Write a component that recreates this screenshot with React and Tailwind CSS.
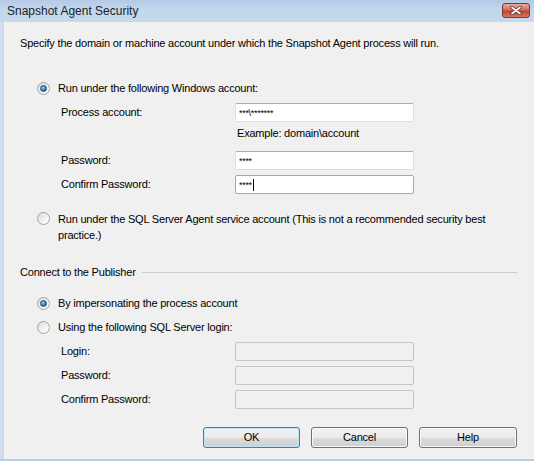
import React from "react";

// Windows 7 style radio button
const Radio = ({ checked }) => (
  <span className="relative w-[13px] h-[13px] shrink-0 rounded-full border border-[#a2a2a2] bg-[linear-gradient(135deg,#d9d9d9,#f4f4f4_60%,#ffffff)] flex items-center justify-center">
    {checked && (
      <span className="w-[7px] h-[7px] rounded-full border border-[#1c4e73] bg-[radial-gradient(circle_at_40%_35%,#9fd7ff,#2a7bc4_55%,#1d5c95)]" />
    )}
  </span>
);

const TextBox = ({ value, focused, disabled, caret }) => {
  let cls =
    "w-[179px] h-[19px] rounded-[2px] border flex items-center pl-[3px] text-[9px] leading-none tracking-[-0.3px] ";
  if (disabled) cls += "bg-[#f0f0f0] border-[#c5c5c5]";
  else if (focused) cls += "bg-white border-[#7fb2e4]";
  else cls += "bg-white border-[#dbdfe6] border-t-[#abadb3]";
  return (
    <div className={cls}>
      <span className="pt-[2px]">{value}</span>
      {caret && <span className="w-px h-[12px] bg-black ml-[1px]" />}
    </div>
  );
};

const FieldRow = ({ label, className, ...box }) => (
  <div className={"flex items-center " + className}>
    <span className="ml-[41px] w-[174px]">{label}</span>
    <TextBox {...box} />
  </div>
);

const Button = ({ label, isDefault, className }) => (
  <button
    type="button"
    className={
      "h-[21px] rounded-[3px] border text-[11px] text-black bg-[linear-gradient(#f2f2f2,#ebebeb_50%,#dddddd_50%,#cfcfcf)] " +
      (isDefault
        ? "border-[#3c7fb1] shadow-[inset_0_0_0_1px_#bfe4f8]"
        : "border-[#707070] shadow-[inset_0_0_0_1px_#fbfbfb]") +
      " " +
      className
    }
  >
    {label}
  </button>
);

const CloseButton = () => (
  <div className="w-[28px] h-[15px] mt-[3px] mr-[4px] rounded-[3px] border border-[#7a3a34] bg-[linear-gradient(#e9a99b,#d0705f_45%,#c0432d_55%,#d67b62)] flex items-center justify-center">
    <svg width="12" height="9" viewBox="0 0 12 9">
      <path d="M2 1.5 L10 7.5 M10 1.5 L2 7.5" stroke="#5a2a22" strokeWidth="3.4" strokeLinecap="round" />
      <path d="M2 1.5 L10 7.5 M10 1.5 L2 7.5" stroke="#ffffff" strokeWidth="1.8" strokeLinecap="round" />
    </svg>
  </div>
);

export default function App() {
  return (
    <div className="w-[534px] h-[461px] flex flex-col bg-[#c3d6ec] font-['Liberation_Sans',Arial,sans-serif] text-[11px] tracking-[-0.2px] text-black overflow-hidden">
      {/* title bar */}
      <div className="h-[22px] shrink-0 flex items-start justify-between bg-[linear-gradient(#b3cae6,#c2d6ed_40%,#c6d9ee)]">
        <span className="ml-[7px] mt-[4px] text-[12px] leading-[14px] tracking-normal text-[#1e1e1e]">Snapshot Agent Security</span>
        <CloseButton />
      </div>

      <div className="flex flex-1 min-h-0">
        <div className="w-[4px] shrink-0 bg-[linear-gradient(90deg,#d4e2f2,#c6d8ee)]" />
        <div className="flex-1 bg-[#f0f0f0] pl-[16px] pt-[14px] flex flex-col">
          <p className="h-[14px] leading-[14px]">
            Specify the domain or machine account under which the Snapshot Agent process will run.
          </p>

          <label className="flex items-center h-[14px] mt-[31px] ml-[17px]">
            <Radio checked />
            <span className="ml-[8px]">Run under the following Windows account:</span>
          </label>

          <FieldRow label="Process account:" className="mt-[8px]" value="***\*******" />
          <p className="h-[14px] leading-[14px] mt-[4px] ml-[217px]">Example: domain\account</p>
          <FieldRow label="Password:" className="mt-[11px]" value="****" />
          <FieldRow label="Confirm Password:" className="mt-[5px]" value="****" focused caret />

          <label className="flex items-start mt-[17px] ml-[17px] leading-[16px]">
            <span className="mt-[1px]">
              <Radio />
            </span>
            <span className="ml-[8px]">
              Run under the SQL Server Agent service account (This is not a recommended security best
              <br />
              practice.)
            </span>
          </label>

          <div className="flex items-center h-[14px] mt-[22px] mr-[17px]">
            <span>Connect to the Publisher</span>
            <span className="flex-1 h-px bg-[#c9cdd1] ml-[6px]" />
          </div>

          <label className="flex items-center h-[14px] mt-[17px] ml-[17px]">
            <Radio checked />
            <span className="ml-[8px]">By impersonating the process account</span>
          </label>
          <label className="flex items-center h-[14px] mt-[10px] ml-[17px]">
            <Radio />
            <span className="ml-[8px]">Using the following SQL Server login:</span>
          </label>

          <FieldRow label="Login:" className="mt-[8px]" disabled />
          <FieldRow label="Password:" className="mt-[5px]" disabled />
          <FieldRow label="Confirm Password:" className="mt-[5px]" disabled />

          <div className="flex justify-end gap-[11px] mt-[18px] mr-[17px]">
            <Button label="OK" isDefault className="w-[97px]" />
            <Button label="Cancel" className="w-[97px]" />
            <Button label="Help" className="w-[98px]" />
          </div>
        </div>
      </div>
      <div className="h-[2px] shrink-0 bg-[#b9cfe8]" />
    </div>
  );
}
